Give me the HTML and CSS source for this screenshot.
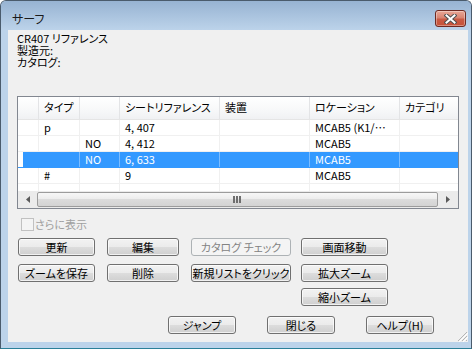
FILE: index.html
```html
<!DOCTYPE html>
<html lang="ja">

<head>
    <meta charset="UTF-8">
    <meta name="viewport" content="width=device-width, initial-scale=1.0">
    <title>サーフ</title>
    <link rel="stylesheet" href="styles.css">
</head>

<body>
    <div class="window">
        <div class="title-bar">
            <span class="title">サーフ</span>
            <button class="close-btn" title="閉じる">
                <svg width="13" height="10" viewBox="0 0 13 10">
                    <path d="M2.5 1.5 L10.5 8.5 M10.5 1.5 L2.5 8.5" stroke="#505050" stroke-width="4" stroke-linecap="square" fill="none" />
                    <path d="M2.5 1.5 L10.5 8.5 M10.5 1.5 L2.5 8.5" stroke="#ffffff" stroke-width="2" stroke-linecap="square" fill="none" />
                </svg>
            </button>
        </div>

        <div class="client">
            <!-- Part info -->
            <div class="info">
                <div class="info-line">CR407 リファレンス</div>
                <div class="info-line">製造元:</div>
                <div class="info-line">カタログ:</div>
            </div>

            <!-- Result list -->
            <div class="grid-view">
                <div class="grid-rows">
                    <div class="grid-row header">
                        <div class="cell"></div>
                        <div class="cell">タイプ</div>
                        <div class="cell"></div>
                        <div class="cell">シートリファレンス</div>
                        <div class="cell">装置</div>
                        <div class="cell">ロケーション</div>
                        <div class="cell">カテゴリ</div>
                    </div>
                    <div class="grid-row">
                        <div class="cell"></div>
                        <div class="cell">p</div>
                        <div class="cell"></div>
                        <div class="cell">4, 407</div>
                        <div class="cell"></div>
                        <div class="cell">MCAB5 (K1/…</div>
                        <div class="cell"></div>
                    </div>
                    <div class="grid-row">
                        <div class="cell"></div>
                        <div class="cell"></div>
                        <div class="cell">NO</div>
                        <div class="cell">4, 412</div>
                        <div class="cell"></div>
                        <div class="cell">MCAB5</div>
                        <div class="cell"></div>
                    </div>
                    <div class="grid-row selected">
                        <div class="cell"></div>
                        <div class="cell"></div>
                        <div class="cell">NO</div>
                        <div class="cell">6, 633</div>
                        <div class="cell"></div>
                        <div class="cell">MCAB5</div>
                        <div class="cell"></div>
                    </div>
                    <div class="grid-row">
                        <div class="cell"></div>
                        <div class="cell">#</div>
                        <div class="cell"></div>
                        <div class="cell">9</div>
                        <div class="cell"></div>
                        <div class="cell">MCAB5</div>
                        <div class="cell"></div>
                    </div>
                    <div class="grid-row">
                        <div class="cell"></div>
                        <div class="cell"></div>
                        <div class="cell"></div>
                        <div class="cell"></div>
                        <div class="cell"></div>
                        <div class="cell"></div>
                        <div class="cell"></div>
                    </div>
                </div>
                <div class="hscroll">
                    <div class="arrow">
                        <svg width="4" height="7" viewBox="0 0 4 7"><polygon points="4,0 0,3.5 4,7" fill="#5a5a5a" /></svg>
                    </div>
                    <div class="thumb">
                        <svg width="9" height="7" viewBox="0 0 9 7">
                            <rect x="0" y="0" width="2" height="7" fill="#6e6e6e" />
                            <rect x="3" y="0" width="2" height="7" fill="#6e6e6e" />
                            <rect x="6" y="0" width="2" height="7" fill="#6e6e6e" />
                        </svg>
                    </div>
                    <div class="arrow">
                        <svg width="4" height="7" viewBox="0 0 4 7"><polygon points="0,0 4,3.5 0,7" fill="#5a5a5a" /></svg>
                    </div>
                </div>
            </div>

            <label class="more"><span class="check"></span>さらに表示</label>

            <!-- Actions -->
            <div class="button-grid">
                <button class="btn col1">更新</button>
                <button class="btn col2">編集</button>
                <button class="btn col3" disabled>カタログ チェック</button>
                <button class="btn col4">画面移動</button>
                <button class="btn col1">ズームを保存</button>
                <button class="btn col2">削除</button>
                <button class="btn col3">新規リストをクリック</button>
                <button class="btn col4">拡大ズーム</button>
                <button class="btn col4">縮小ズーム</button>
            </div>

            <div class="footer-buttons">
                <button class="btn">ジャンプ</button>
                <button class="btn">閉じる</button>
                <button class="btn">ヘルプ(H)</button>
            </div>

            <svg class="grip" width="12" height="12" viewBox="0 0 12 12">
                <path d="M11 2 L2 11 M11 6 L6 11 M11 10 L10 11" stroke="#b4b4b4" stroke-width="1" fill="none" />
                <path d="M12 3 L3 12 M12 7 L7 12" stroke="#ffffff" stroke-width="1" fill="none" />
            </svg>
        </div>
    </div>
</body>

</html>
```

FILE: styles.css
```css
* {
    box-sizing: border-box;
}

body {
    margin: 0;
    background: #fff;
    font-family: "Noto Sans CJK JP", sans-serif;
    font-size: 11px;
    font-feature-settings: "palt";
    color: #000;
}

.window {
    width: 472px;
    height: 349px;
    border: 1px solid #4a5b6c;
    border-bottom-color: #2b8099;
    border-radius: 6px 6px 0 0;
    background: #bcd3ea;
    display: flex;
    flex-direction: column;
}

.title-bar {
    height: 29px;
    display: flex;
    align-items: flex-start;
    background: linear-gradient(#97b3d2, #bcd3ea);
    border-radius: 5px 5px 0 0;
}

.title {
    margin: 10px 0 0 11px;
    font-size: 12px;
    line-height: 16px;
    color: #1a1a1a;
}

.close-btn {
    margin: 9px 5px 0 auto;
    width: 31px;
    height: 17px;
    padding: 0;
    border: 1px solid #6e2a22;
    border-radius: 3px;
    background: linear-gradient(#e9a796, #d88472 45%, #c95a44 55%, #c75238);
    box-shadow: inset 0 0 0 1px rgba(255, 255, 255, 0.35);
    display: flex;
    align-items: center;
    justify-content: center;
}

.client {
    flex: 1;
    margin: 0 3px 6px 7px;
    padding: 2px 9px 0;
    background: #f0f0f0;
    position: relative;
}

.info-line {
    height: 12px;
    line-height: 12px;
}

/* list view */
.grid-view {
    margin-top: 28px;
    width: 442px;
    height: 113px;
    border: 1px solid #828790;
    background: #fff;
}

.grid-rows {
    height: 94px;
    overflow: hidden;
}

.grid-row {
    display: grid;
    grid-template-columns: 21px 41px 40px 100px 90px 90px 58px;
    height: 16px;
    border-bottom: 1px solid #f0f0f0;
    line-height: 15px;
}

.grid-row .cell {
    border-right: 1px solid #f0f0f0;
    padding-left: 5px;
    white-space: nowrap;
    overflow: hidden;
}

.grid-row .cell:last-child {
    border-right: none;
}

.grid-row.header {
    height: 23px;
    line-height: 21px;
    border-bottom-color: #e5e5e5;
    background: linear-gradient(#ffffff, #f7f8f9 60%, #f0f1f3);
}

.grid-row.header .cell {
    border-right-color: #e3e4e6;
}

.grid-row.selected {
    background: linear-gradient(to right, #fff 5px, #3399ff 5px);
    border-bottom-color: #3399ff;
    color: #fff;
}

.grid-row.selected .cell {
    border-right-color: #7bbcff;
}

.grid-row.selected .cell:first-child {
    border-right-color: #3399ff;
}

.hscroll {
    height: 17px;
    display: flex;
    background: #ebebeb;
}

.hscroll .arrow {
    width: 19px;
    display: flex;
    align-items: center;
    justify-content: center;
}

.hscroll .arrow:last-child {
    width: 20px;
}

.hscroll .thumb {
    flex: 1;
    margin: 1px 0;
    border: 1px solid #9c9c9c;
    border-radius: 2px;
    background: linear-gradient(#f7f7f7, #ececec 50%, #dcdcdc 50%, #d3d3d3);
    display: flex;
    align-items: center;
    justify-content: center;
}

/* checkbox */
.more {
    margin: 9px 0 0 4px;
    height: 13px;
    display: flex;
    align-items: center;
    color: #a0a0a0;
    line-height: 13px;
}

.check {
    width: 13px;
    height: 13px;
    margin-right: 1px;
    border: 1px solid #c1c1c1;
    background: #f4f4f4;
}

/* buttons */
.btn {
    height: 18px;
    padding: 0;
    border: 1px solid #707070;
    border-radius: 3px;
    background: linear-gradient(#f2f2f2, #ebebeb 50%, #dddddd 50%, #cfcfcf);
    box-shadow: inset 0 0 0 1px rgba(255, 255, 255, 0.7);
    font-family: inherit;
    font-size: 11px;
    font-feature-settings: "palt";
    line-height: 16px;
    color: #000;
    white-space: nowrap;
}

.btn:disabled {
    border-color: #adb2b5;
    background: #f4f4f4;
    box-shadow: none;
    color: #838383;
}

.button-grid {
    margin: 7px 0 0 1px;
    display: grid;
    grid-template-columns: 77px 12px 72px 12px 100px 10px 87px;
    grid-template-rows: 26px 24px 18px;
    align-items: start;
    width: max-content;
}

.col1 {
    grid-column: 1;
}

.col2 {
    grid-column: 3;
}

.col3 {
    grid-column: 5;
}

.col4 {
    grid-column: 7;
}

.footer-buttons {
    margin: 10px 0 0 151px;
    display: flex;
    gap: 31px;
}

.footer-buttons .btn {
    width: 68px;
}

.grip {
    position: absolute;
    right: 0;
    bottom: 0;
}
```
